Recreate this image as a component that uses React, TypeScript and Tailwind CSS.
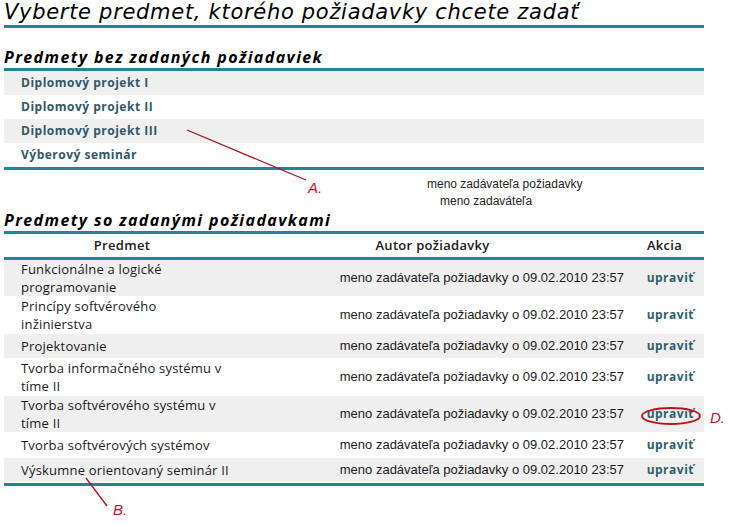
import React from 'react';

const bezPoziadaviek = [
  'Diplomový projekt I',
  'Diplomový projekt II',
  'Diplomový projekt III',
  'Výberový seminár',
];

// riadky predmetov tak, ako sa zalamujú v stĺpci
const sPoziadavkami: string[][] = [
  ['Funkcionálne a logické', 'programovanie'],
  ['Princípy softvérového', 'inžinierstva'],
  ['Projektovanie'],
  ['Tvorba informačného systému v', 'tíme II'],
  ['Tvorba softvérového systému v', 'tíme II'],
  ['Tvorba softvérových systémov'],
  ['Výskumne orientovaný seminár II'],
];

const autor = 'meno zadávateľa požiadavky o 09.02.2010 23:57';

export default function App() {
  return (
    <div className="relative w-[731px] h-[524px] overflow-hidden bg-white text-[#222] font-['Open_Sans',sans-serif]">
      <div className="ml-[4px] w-[700px]">
        {/* nadpis */}
        <h1 className="h-[28px] border-b-[3px] border-[#22849c] text-[21px] leading-[25px] italic tracking-[0.7px] text-black font-['DejaVu_Sans',sans-serif] font-normal">
          Vyberte predmet, ktorého požiadavky chcete zadať
        </h1>

        <h2 className="mt-[19px] h-[24px] border-b-[3px] border-[#22849c] text-[16px] leading-[21px] italic font-bold tracking-[1.4px] text-black">
          Predmety bez zadaných požiadaviek
        </h2>
        <div className="border-b-[3px] border-[#22849c]">
          {bezPoziadaviek.map((p, i) => (
            <div
              key={p}
              className={`h-[24px] pl-[17px] flex items-center text-[12px] font-bold tracking-[0.5px] text-[#2f5868] ${i % 2 === 0 ? 'bg-[#efefef]' : 'bg-white'}`}
            >
              {p}
            </div>
          ))}
        </div>

        <div className="mt-[6px] text-[12px] leading-[17px] text-[#222] font-['Liberation_Sans',sans-serif]">
          <div className="pl-[423px]">meno zadávateľa požiadavky</div>
          <div className="pl-[436px]">meno zadaváteľa</div>
        </div>

        <h2 className="h-[24px] border-b-[3px] border-[#22849c] text-[16px] leading-[21px] italic font-bold tracking-[1.4px] text-black">
          Predmety so zadanými požiadavkami
        </h2>

        <div className="grid grid-cols-[236px_385px_79px] h-[26px] items-center border-b-[3px] border-[#22849c] text-[13px] font-semibold text-[#1a1a1a] tracking-[0.3px]">
          <div className="text-center">Predmet</div>
          <div className="text-center">Autor požiadavky</div>
          <div className="text-center">Akcia</div>
        </div>

        <div className="border-b-[3px] border-[#22849c]">
          {sPoziadavkami.map((lines, i) => (
            <div
              key={lines.join(' ')}
              className={`grid grid-cols-[236px_385px_79px] items-center min-h-[25px] border-b border-white ${i % 2 === 0 ? 'bg-[#efefef]' : 'bg-white'}`}
            >
              <div className="pl-[17px] text-[13px] leading-[18px] tracking-[0.2px] text-[#1a1a1a] whitespace-nowrap">
                {lines.map((l) => (
                  <div key={l}>{l}</div>
                ))}
              </div>
              <div className="text-right pr-[1px] text-[13px] leading-[18px] text-[#1a1a1a] font-['Liberation_Sans',sans-serif] whitespace-nowrap">
                {autor}
              </div>
              <div className="text-right pr-[10px] text-[12px] leading-[18px] font-bold tracking-[0.5px] text-[#2d5f6e]">upraviť</div>
            </div>
          ))}
        </div>
      </div>

      {/* poznámky */}
      <svg className="absolute inset-0 pointer-events-none" width="731" height="524">
        <line x1="187" y1="130" x2="306" y2="180" stroke="#b0101c" strokeWidth="1.3" />
        <line x1="86" y1="478" x2="107" y2="506" stroke="#b0101c" strokeWidth="1.3" />
        <ellipse cx="671" cy="416" rx="29" ry="8" fill="none" stroke="#c0101c" strokeWidth="1.8" />
      </svg>
      <span className="absolute left-[308px] top-[179px] text-[15px] leading-[17px] italic text-[#c8102a] font-['Liberation_Sans',sans-serif]">A.</span>
      <span className="absolute left-[113px] top-[501px] text-[15px] leading-[17px] italic text-[#c8102a] font-['Liberation_Sans',sans-serif]">B.</span>
      <span className="absolute left-[710px] top-[409px] text-[15px] leading-[17px] italic text-[#c8102a] font-['Liberation_Sans',sans-serif]">D.</span>
    </div>
  );
}
